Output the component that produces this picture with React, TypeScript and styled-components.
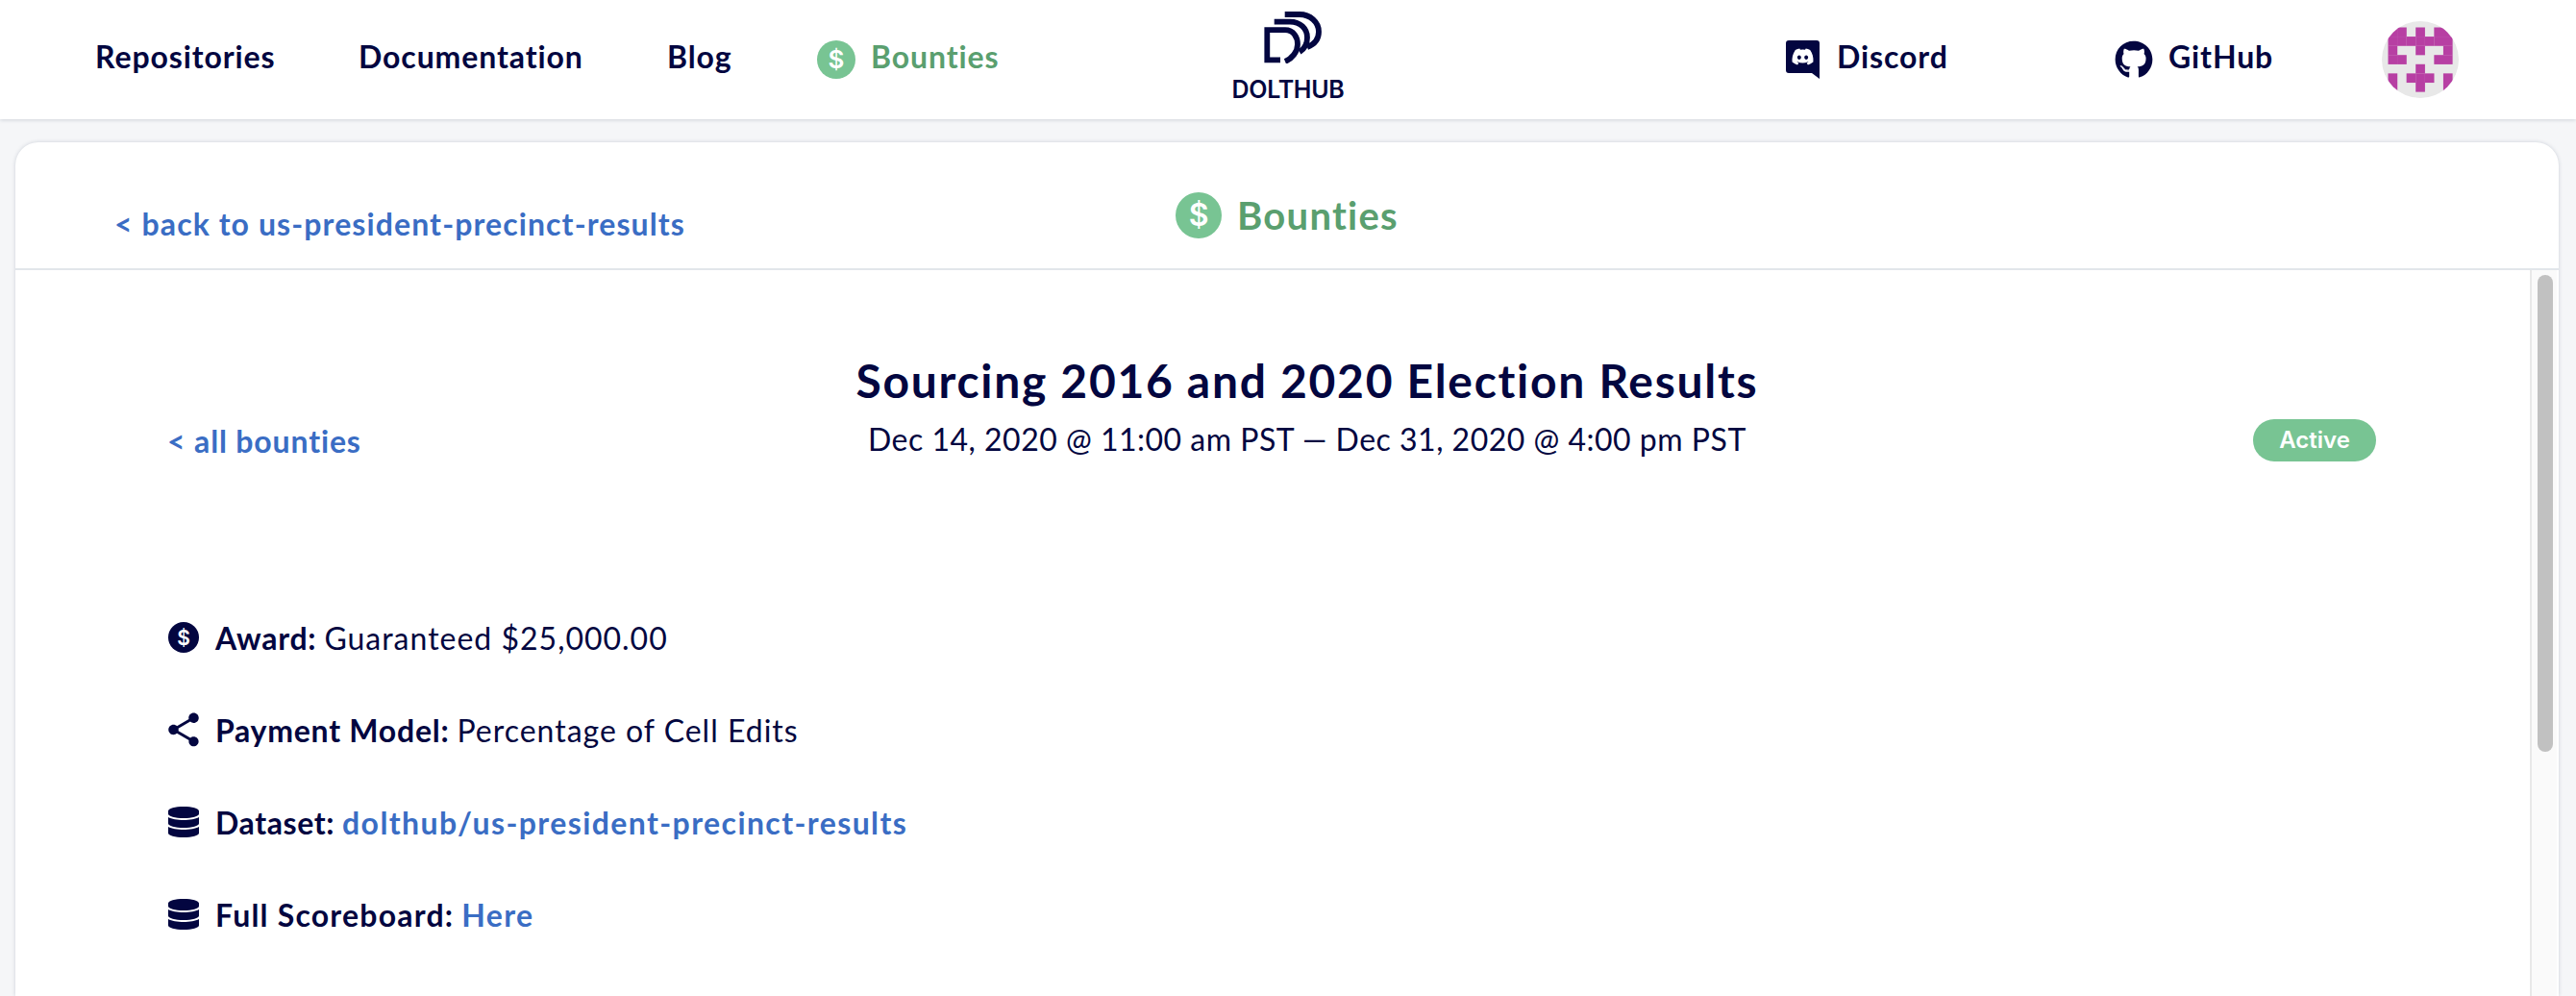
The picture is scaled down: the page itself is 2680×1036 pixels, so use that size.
import { createGlobalStyle, styled } from 'styled-components';
import { FaDatabase, FaDiscord, FaGithub } from 'react-icons/fa';
import { MdShare } from 'react-icons/md';

const NAVY = '#030640';
const BLUE = '#3a6dc4';
const GREEN = '#5a9f6f';
const LIGHT_GREEN = '#78c493';

const GlobalStyle = createGlobalStyle`
  html, body {
    margin: 0;
    height: 100%;
    overflow: hidden;
    background: #f5f6f8;
    color: ${NAVY};
    font-family: "Lato", "Liberation Sans", sans-serif;
  }
`;

const S = {
  Page: styled.div`
    display: flex;
    flex-direction: column;
    height: 1036px;
  `,

  Nav: styled.nav`
    display: grid;
    grid-template-columns: 1fr auto 1fr;
    align-items: center;
    flex: 0 0 124px;
    box-sizing: border-box;
    background: #fff;
    box-shadow: 0 1px 4px rgba(20, 40, 70, 0.16);
  `,

  NavLeft: styled.div`
    display: flex;
    align-items: center;
    padding-left: 99px;
  `,

  NavRight: styled.div`
    display: flex;
    align-items: center;
    justify-content: flex-end;
    padding-right: 122px;
  `,

  NavLink: styled.a<{ $width: number; $active?: boolean }>`
    display: flex;
    align-items: center;
    width: ${({ $width }) => $width}px;
    font-size: 32px;
    font-weight: 700;
    letter-spacing: 0.9px;
    color: ${({ $active }) => ($active ? GREEN : NAVY)};
  `,

  NavLabel: styled.span`
    padding-bottom: 8px;
  `,

  Logo: styled.div`
    display: flex;
    flex-direction: column;
    align-items: center;
    gap: 17px;
    padding-bottom: 9px;
  `,

  LogoMark: styled.svg`
    display: block;
    margin-left: 10px;
  `,

  LogoText: styled.span`
    font-family: "Inter", sans-serif;
    font-size: 25px;
    line-height: 20px;
    font-weight: 600;
    letter-spacing: -0.3px;
  `,

  IconSlot: styled.span<{ $gap: number }>`
    display: flex;
    margin-right: ${({ $gap }) => $gap}px;
  `,

  Coin: styled.span<{ $size: number; $color: string }>`
    display: flex;
    justify-content: center;
    align-items: center;
    width: ${({ $size }) => $size}px;
    height: ${({ $size }) => $size}px;
    border-radius: 50%;
    background: ${({ $color }) => $color};
    color: #fff;
    font-family: "Inter", sans-serif;
    font-size: ${({ $size }) => Math.round($size * 0.66)}px;
    font-weight: 600;
    letter-spacing: 0;
    line-height: 1;
  `,

  Card: styled.main`
    display: flex;
    flex-direction: column;
    flex: 1;
    min-height: 0;
    margin: 24px 18px 0 16px;
    border-radius: 24px 24px 0 0;
    background: #fff;
    box-shadow: 0 0 4px rgba(20, 40, 70, 0.18);
    overflow: hidden;
  `,

  CardHeader: styled.header`
    display: grid;
    grid-template-columns: 1fr auto 1fr;
    flex: 0 0 133px;
    box-sizing: border-box;
    border-bottom: 2px solid #e2e6ea;
  `,

  BackLink: styled.a`
    align-self: end;
    padding: 0 0 27px 103px;
    font-size: 32px;
    font-weight: 700;
    letter-spacing: 1.1px;
    color: ${BLUE};
  `,

  CardTitle: styled.h1`
    display: flex;
    align-items: center;
    margin: 0;
    padding-top: 20px;
    font-size: 40px;
    font-weight: 700;
    letter-spacing: 1.25px;
    color: ${GREEN};
  `,

  CardBody: styled.div`
    display: flex;
    flex: 1;
    min-height: 0;
  `,

  Content: styled.div`
    flex: 1;
    padding: 0 160px 0 158px;
  `,

  BountyHeader: styled.div`
    display: flex;
    justify-content: space-between;
    align-items: flex-end;
    padding-top: 86px;
  `,

  AllLink: styled.a`
    padding-bottom: 2px;
    font-size: 32px;
    font-weight: 700;
    letter-spacing: 0.85px;
    color: ${BLUE};
  `,

  Heading: styled.div`
    padding-bottom: 3px;
    text-align: center;
  `,

  Title: styled.h2`
    margin: 0 0 12px;
    font-size: 48px;
    line-height: 58px;
    font-weight: 700;
    letter-spacing: 1.7px;
  `,

  Dates: styled.div`
    font-size: 32px;
    line-height: 40px;
    letter-spacing: 0.5px;
  `,

  Pill: styled.span`
    display: block;
    box-sizing: border-box;
    width: 128px;
    height: 44px;
    border-radius: 22px;
    background: ${LIGHT_GREEN};
    color: #fff;
    font-family: "Inter", sans-serif;
    font-size: 24px;
    font-weight: 600;
    line-height: 44px;
    text-align: center;
  `,

  Details: styled.ul`
    display: flex;
    flex-direction: column;
    gap: 56px;
    margin: 0;
    padding: 163px 0 0;
    list-style: none;
  `,

  Detail: styled.li`
    display: flex;
    align-items: center;
    height: 40px;
    font-size: 32px;
    letter-spacing: 1px;
  `,

  DetailIcon: styled.span`
    display: flex;
    justify-content: center;
    align-items: center;
    width: 32px;
    min-width: 0;
    flex: none;
    margin: 0 17px 0 1px;
  `,

  Label: styled.strong<{ $spacing?: number }>`
    font-weight: 700;
    letter-spacing: ${({ $spacing = 0.75 }) => $spacing}px;
    margin-right: 8px;
  `,

  DetailLink: styled.a`
    font-weight: 700;
    letter-spacing: 1.4px;
    color: ${BLUE};
  `,

  Share: styled(MdShare)`
    flex: none;
    width: 42px;
    height: 42px;
  `,

  Database: styled(FaDatabase)`
    display: block;
    width: 32px;
    height: 32px;
  `,

  ScrollTrack: styled.div`
    flex: 0 0 28px;
    box-sizing: border-box;
    margin-right: 2px;
    padding: 5px 4px 0 6px;
    border-left: 2px solid #e8e8e8;
    background: #fafafa;
  `,

  ScrollThumb: styled.div`
    height: 496px;
    border-radius: 8px;
    background: #c1c1c1;
  `,

  Avatar: styled.svg`
    display: block;
    border-radius: 50%;
  `,
};

// filled cells of the 7x7 identicon, top to bottom
const AVATAR_ROWS = [
  '##.#.##',
  '#######',
  '#..#..#',
  '##...##',
  '...#...',
  '#.###.#',
  '#..#..#',
];

function Avatar() {
  return (
    <S.Avatar width="80" height="80" viewBox="0 0 80 80">
      <rect width="80" height="80" fill="#e8e8e8" />
      {AVATAR_ROWS.map((row, y) =>
        row.split('').map((cell, x) =>
          cell === '#' ? (
            <rect
              key={`${x}-${y}`}
              x={6.5 + x * 9.57}
              y={6.5 + y * 9.57}
              width="9.7"
              height="9.7"
              fill="#b73fa3"
            />
          ) : null,
        ),
      )}
    </S.Avatar>
  );
}

function LogoMark() {
  return (
    <S.LogoMark width="60" height="54" viewBox="0 0 60 54" fill="none" stroke={NAVY} strokeWidth="5.8">
      <path d="M17 50.3H3.3V19.2H22C31 19.2 35 27 35 34C35 42 29 49 22 52" />
      <path d="M10.7 10.7H27C38 10.7 45 18 45 27C45 34 42 39 37 42" />
      <path d="M21.7 3H37C48 3 57 11 57 21C57 28 53 34 45 37" />
    </S.LogoMark>
  );
}

function DiscordIcon() {
  return (
    <svg width="35" height="40" viewBox="0 0 35 40">
      <path
        d="M3 0H32A3 3 0 0 1 35 3V40L27 34H3A3 3 0 0 1 0 31V3A3 3 0 0 1 3 0Z"
        fill={NAVY}
      />
      <FaDiscord x="5.5" y="5" size="24" color="#fff" />
    </svg>
  );
}

function App() {
  return (
    <S.Page>
      <GlobalStyle />
      <S.Nav>
        <S.NavLeft>
          <S.NavLink $width={274}><S.NavLabel>Repositories</S.NavLabel></S.NavLink>
          <S.NavLink $width={321}><S.NavLabel>Documentation</S.NavLabel></S.NavLink>
          <S.NavLink $width={156}><S.NavLabel>Blog</S.NavLabel></S.NavLink>
          <S.NavLink $width={200} $active>
            <S.IconSlot $gap={16}>
              <S.Coin $size={40} $color={LIGHT_GREEN}>$</S.Coin>
            </S.IconSlot>
            <S.NavLabel>Bounties</S.NavLabel>
          </S.NavLink>
        </S.NavLeft>
        <S.Logo>
          <LogoMark />
          <S.LogoText>DOLTHUB</S.LogoText>
        </S.Logo>
        <S.NavRight>
          <S.NavLink $width={342}>
            <S.IconSlot $gap={18}>
              <DiscordIcon />
            </S.IconSlot>
            <S.NavLabel>Discord</S.NavLabel>
          </S.NavLink>
          <S.NavLink $width={278}>
            <S.IconSlot $gap={16}>
              <FaGithub size={40} />
            </S.IconSlot>
            <S.NavLabel>GitHub</S.NavLabel>
          </S.NavLink>
          <Avatar />
        </S.NavRight>
      </S.Nav>
      <S.Card>
        <S.CardHeader>
          <S.BackLink>&lt; back to us-president-precinct-results</S.BackLink>
          <S.CardTitle>
            <S.IconSlot $gap={16}>
              <S.Coin $size={48} $color={LIGHT_GREEN}>$</S.Coin>
            </S.IconSlot>
            Bounties
          </S.CardTitle>
          <span />
        </S.CardHeader>
        <S.CardBody>
          <S.Content>
            <S.BountyHeader>
              <S.AllLink>&lt; all bounties</S.AllLink>
              <S.Heading>
                <S.Title>Sourcing 2016 and 2020 Election Results</S.Title>
                <S.Dates>Dec 14, 2020 @ 11:00 am PST — Dec 31, 2020 @ 4:00 pm PST</S.Dates>
              </S.Heading>
              <S.Pill>Active</S.Pill>
            </S.BountyHeader>
            <S.Details>
              <S.Detail>
                <S.DetailIcon>
                  <S.Coin $size={32} $color={NAVY}>$</S.Coin>
                </S.DetailIcon>
                <S.Label>Award:</S.Label> Guaranteed $25,000.00
              </S.Detail>
              <S.Detail>
                <S.DetailIcon>
                  <S.Share />
                </S.DetailIcon>
                <S.Label>Payment Model:</S.Label> Percentage of Cell Edits
              </S.Detail>
              <S.Detail>
                <S.DetailIcon>
                  <S.Database preserveAspectRatio="none" />
                </S.DetailIcon>
                <S.Label $spacing={0.6}>Dataset:</S.Label>
                <S.DetailLink>dolthub/us-president-precinct-results</S.DetailLink>
              </S.Detail>
              <S.Detail>
                <S.DetailIcon>
                  <S.Database preserveAspectRatio="none" />
                </S.DetailIcon>
                <S.Label $spacing={1.2}>Full Scoreboard:</S.Label>
                <S.DetailLink>Here</S.DetailLink>
              </S.Detail>
            </S.Details>
          </S.Content>
          <S.ScrollTrack>
            <S.ScrollThumb />
          </S.ScrollTrack>
        </S.CardBody>
      </S.Card>
    </S.Page>
  );
}

export default App;
